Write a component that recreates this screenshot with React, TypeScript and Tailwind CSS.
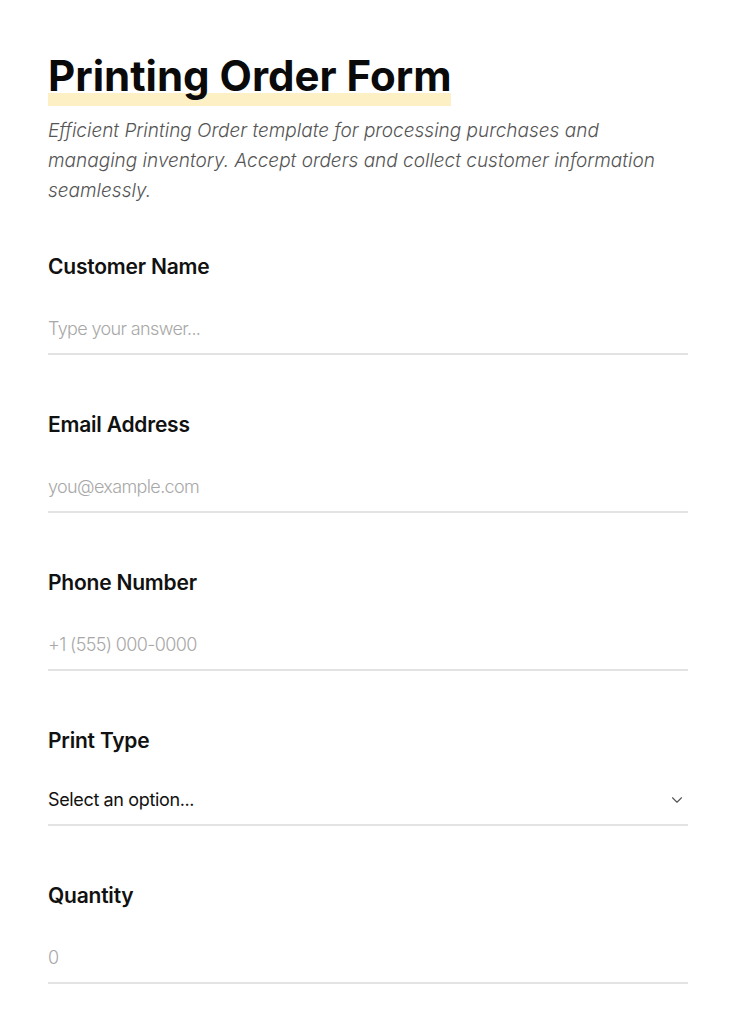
import { ChevronDown } from 'lucide-react';

const font = { fontFamily: 'Inter, "Noto Sans", sans-serif' };

function Field({ label, placeholder }: { label: string; placeholder: string }) {
  return (
    <div className="mb-[56px]">
      <label className="block text-[21px] font-semibold text-[#111] tracking-[-0.01em] leading-7 mb-[34px]">
        {label}
      </label>
      <input
        className="w-full border-b-2 border-[#e3e3e3] pb-[11px] text-[18px] font-light text-[#111] placeholder:text-[#a8a8a8] outline-none tracking-[-0.035em]"
        placeholder={placeholder}
      />
    </div>
  );
}

export default function App() {
  return (
    <div className="min-h-screen bg-white px-12 pt-[50px]" style={font}>
      <h1 className="inline-block text-[42px] font-bold text-[#0a0a0a] leading-[52px] pb-[4px] bg-[linear-gradient(transparent_calc(100%_-_13px),#fdf0c4_calc(100%_-_13px))]">
        Printing Order Form
      </h1>
      <p className="mt-[10px] text-[19px] italic font-light text-[#555] leading-[30px] pr-6">
        Efficient Printing Order template for processing purchases and managing inventory. Accept orders and collect customer information seamlessly.
      </p>
      <div className="mt-[47px]">
        <Field label="Customer Name" placeholder="Type your answer..." />
        <Field label="Email Address" placeholder="you@example.com" />
        <Field label="Phone Number" placeholder="+1 (555) 000-0000" />
        <div className="mb-[56px]">
          <label className="block text-[21px] font-semibold text-[#111] tracking-[-0.01em] leading-7 mb-[31px]">
            Print Type
          </label>
          <div className="flex items-center justify-between border-b-2 border-[#e3e3e3] pb-[11px]">
            <span className="text-[18px] text-[#111] tracking-[-0.02em]">Select an option...</span>
            <ChevronDown className="w-[18px] h-[18px] text-[#555] mr-[2px]" strokeWidth={1.5} />
          </div>
        </div>
        <Field label="Quantity" placeholder="0" />
      </div>
    </div>
  );
}
